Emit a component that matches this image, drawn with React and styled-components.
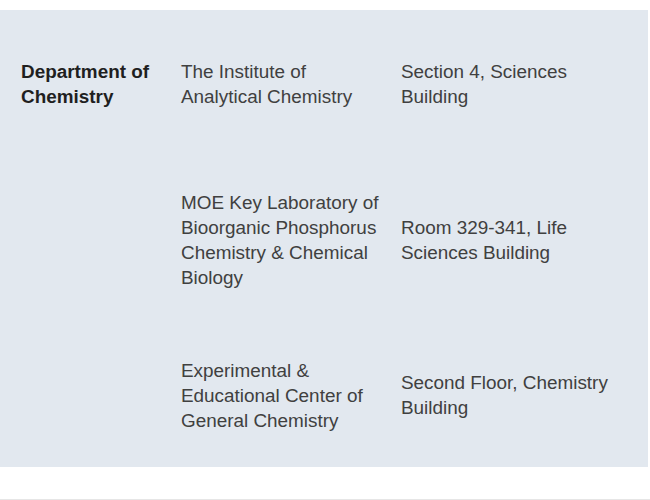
import React from "react";
import styled, { createGlobalStyle } from "styled-components";

const Global = createGlobalStyle`
  html, body { margin: 0; padding: 0; background: #ffffff; }
  body { font-family: "Liberation Sans", Arial, sans-serif; }
`;

const Page = styled.div`
  width: 650px;
  height: 500px;
  box-sizing: border-box;
  padding-top: 10px;
  background: #ffffff;
  border-bottom: 1px solid #e6e6e6;
`;

const Panel = styled.div`
  width: 648px;
  height: 457px;
  background: #e2e8ef;
  display: grid;
  grid-template-columns: 160px 220px 1fr;
  grid-template-rows: 147px 166px 144px;
  padding-left: 21px;
  box-sizing: border-box;
`;

const Cell = styled.div`
  display: flex;
  align-items: center;
  font-size: 18.9px;
  line-height: 25px;
  color: ${(p) => (p.$head ? "#1f1f1f" : "#404040")};
  font-weight: ${(p) => (p.$head ? 700 : 400)};
  padding-right: ${(p) => p.$pr || 0}px;
`;

const rows = [
  {
    head: "Department of Chemistry",
    name: "The Institute of Analytical Chemistry",
    place: "Section 4, Sciences Building",
  },
  {
    head: "",
    name: "MOE Key Laboratory of Bioorganic Phosphorus Chemistry & Chemical Biology",
    place: "Room 329-341, Life Sciences Building",
  },
  {
    head: "",
    name: "Experimental & Educational Center of General Chemistry",
    place: "Second Floor, Chemistry Building",
  },
];

export default function App() {
  return (
    <>
      <Global />
      <Page>
        <Panel>
          {rows.map((r, i) => (
            <React.Fragment key={i}>
              <Cell $head $pr={12}>{r.head}</Cell>
              <Cell $pr={16}>{r.name}</Cell>
              <Cell $pr={20}>{r.place}</Cell>
            </React.Fragment>
          ))}
        </Panel>
      </Page>
    </>
  );
}
